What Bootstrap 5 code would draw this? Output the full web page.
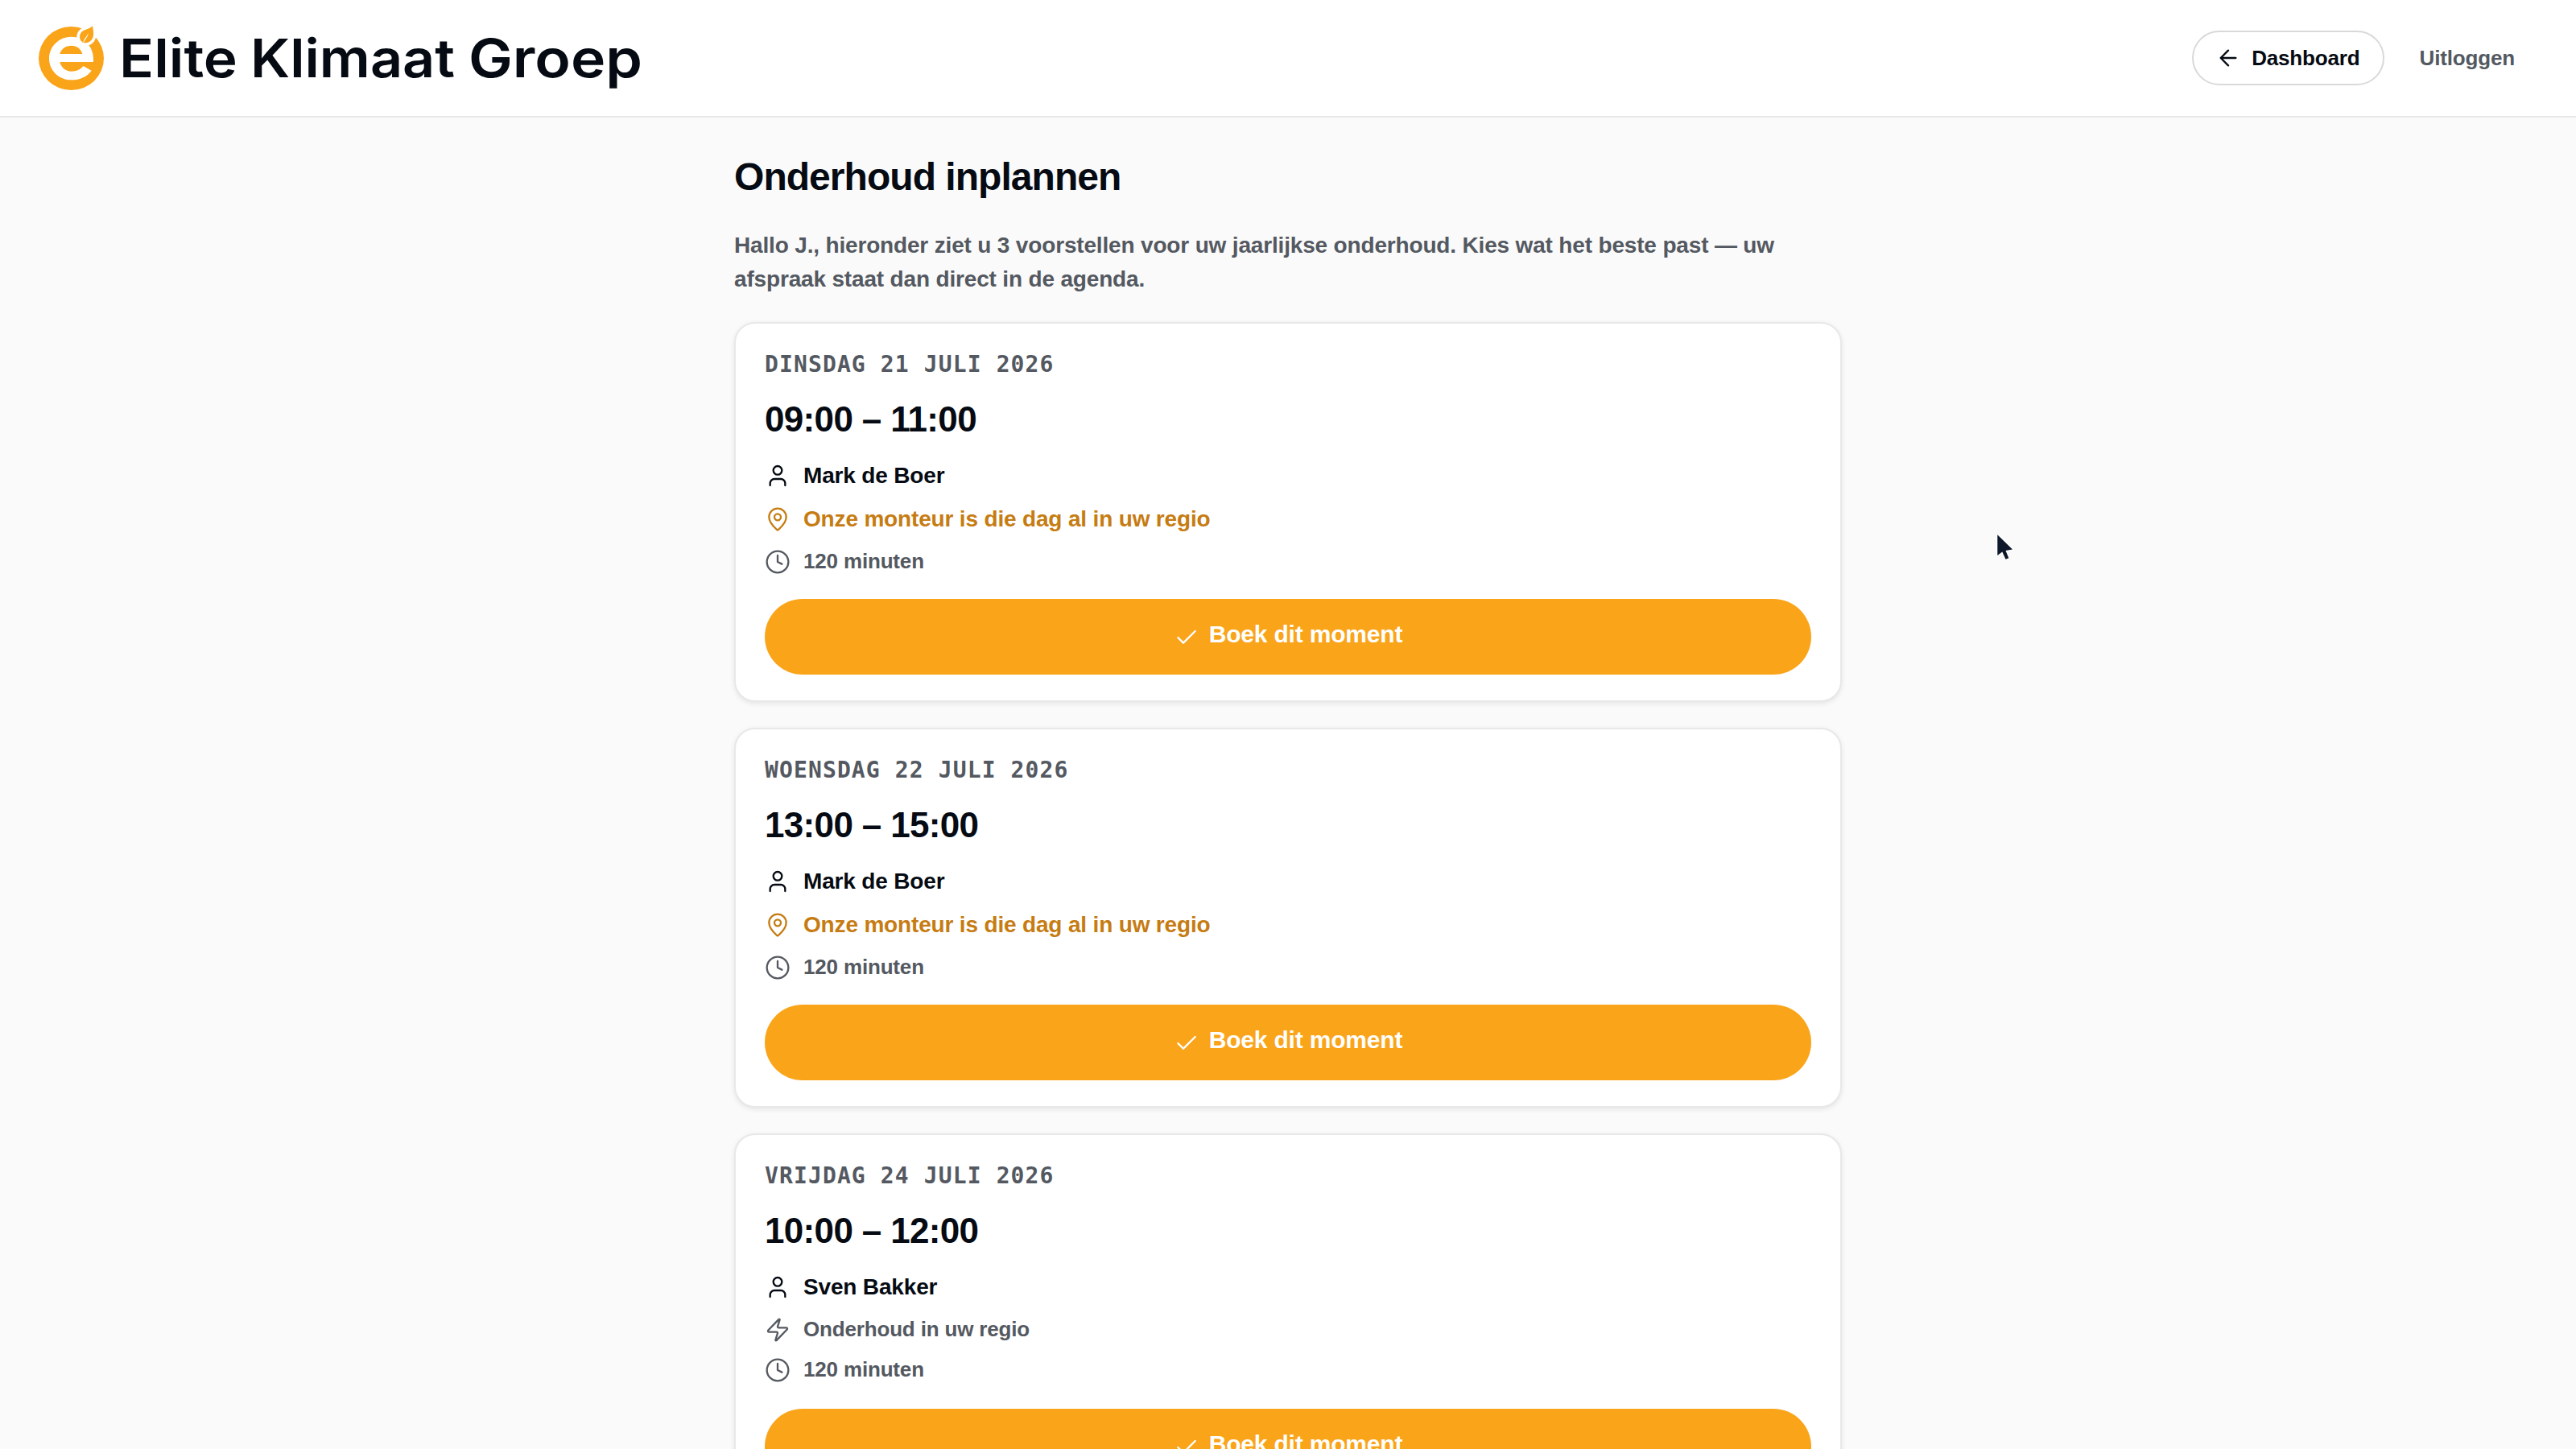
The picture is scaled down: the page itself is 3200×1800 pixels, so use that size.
<!DOCTYPE html>
<html lang="nl">
<head>
<meta charset="utf-8">
<meta name="viewport" content="width=device-width, initial-scale=1">
<title>Onderhoud inplannen – Elite Klimaat Groep</title>
<link href="https://cdn.jsdelivr.net/npm/bootstrap@5.3.0/dist/css/bootstrap.min.css" rel="stylesheet">
<style>
  :root { --ink: #060b13; --muted: #545961; --brand: #faa41a; --accent: #c67c12; --line: #e8e8e8; }
  body { background: #fafafa; color: var(--ink); font-family: "Liberation Sans", Arial, sans-serif; font-weight: 600; font-size: 28px; line-height: 42px; letter-spacing: -.006em; height: 1800px; overflow: hidden; }
  .ico { width: 32px; height: 32px; flex: none; fill: none; stroke: currentColor; stroke-width: 1.75; stroke-linecap: round; stroke-linejoin: round; }
  .topbar { height: 146px; background: #fff; border-bottom: 2px solid var(--line); padding: 0 48px; }
  .brand-mark { width: 82px; height: 80px; }
  .brand-name { width: 680px; height: 80px; font-family: Inter, sans-serif; font-weight: 600; font-size: 66px; letter-spacing: 0; fill: var(--ink); }
  .btn-top { font-size: 26px; line-height: 36px; font-weight: 600; letter-spacing: -.006em; border: 0; padding: 16px 28px; border-radius: 34px; height: 68px; }
  .btn-dash { color: var(--ink); background: #fff; border: 2px solid #d9d9d9; padding: 14px 28px 14px 27px; gap: 13px; }
  .btn-exit { color: var(--muted); }
  .top-nav { gap: 16px; }
  .page { width: 1376px; }
  .page-title { font-size: 48px; line-height: 58px; font-weight: 700; letter-spacing: -.02em; margin: 45px 0 35px; }
  .intro { color: var(--muted); margin: 0 0 32px; }
  .slots { gap: 32px; }
  .slot { background: #fff; border: 2px solid var(--line); border-radius: 26px; padding: 32px 36px; height: 472px; box-shadow: 0 2px 6px rgba(0,0,0,.09); }
  .slot-date { font-family: "DejaVu Sans Mono", monospace; font-weight: 700; letter-spacing: .04em; color: var(--muted); line-height: 38px; }
  .slot-time { font-size: 44px; line-height: 52px; letter-spacing: -.015em; font-weight: 700; margin: 23px 0 22px; }
  .slot-line { gap: 16px; line-height: 43px; margin-bottom: 11px; }
  .slot-line.sm { font-size: 26px; line-height: 39px; margin: 12px 0 0; color: var(--muted); }
  .slot-line.sm + .slot-line.sm { margin-top: 11px; }
  .slot-line.near { color: var(--accent); }
  .btn-book { background: var(--brand); color: #fff; font-size: 30px; line-height: 44px; font-weight: 700; letter-spacing: -.006em; border: 0; border-radius: 48px; height: 94px; gap: 12px; margin-top: 27px; padding: 0; }
  .slot-line.sm + .slot-line.sm + .btn-book { margin-top: 29px; }
  .btn-book .ico { margin-top: 2px; }
  .btn-book span { padding-bottom: 7px; }
  .pointer { position: absolute; left: 2476px; top: 660px; width: 30px; height: 40px; }
</style>
</head>
<body>
<svg class="d-none" xmlns="http://www.w3.org/2000/svg">
  <symbol id="i-user" viewBox="0 0 24 24"><path d="M19 21v-2a4 4 0 0 0-4-4H9a4 4 0 0 0-4 4v2"/><circle cx="12" cy="7" r="4"/></symbol>
  <symbol id="i-pin" viewBox="0 0 24 24"><path d="M20 10c0 4.993-5.539 10.193-7.399 11.799a1 1 0 0 1-1.202 0C9.539 20.193 4 14.993 4 10a8 8 0 0 1 16 0"/><circle cx="12" cy="10" r="3"/></symbol>
  <symbol id="i-clock" viewBox="0 0 24 24"><circle cx="12" cy="12" r="10"/><path d="M12 6v6l4 2"/></symbol>
  <symbol id="i-zap" viewBox="0 0 24 24"><path d="M4 14a1 1 0 0 1-.78-1.63l9.9-10.2a.5.5 0 0 1 .86.46l-1.92 6.02A1 1 0 0 0 13 10h7a1 1 0 0 1 .78 1.63l-9.9 10.2a.5.5 0 0 1-.86-.46l1.92-6.02A1 1 0 0 0 11 14z"/></symbol>
  <symbol id="i-check" viewBox="0 0 24 24"><path d="M20 6 9 17l-5-5"/></symbol>
  <symbol id="i-back" viewBox="0 0 24 24"><path d="m12 19-7-7 7-7M19 12H5"/></symbol>
</svg>

<header class="topbar d-flex align-items-center justify-content-between">
  <a class="d-flex align-items-center text-reset text-decoration-none" href="#">
    <svg class="brand-mark" viewBox="54 66 246 240">
      <ellipse cx="175.500" cy="187.500" rx="121.500" ry="118.500" fill="#faa41a"/>
      <path fill="#fff" fill-rule="evenodd" d="M258 201H133C138 222 155 236 176 236C195 236 209 230 220 216L251 233C236 255 208 268 176 268C130 268 93 233 93 188C93 143 130 107 176 107C222 107 258 143 258 188ZM133 171H217C212 152 196 140 176 140C155 140 138 152 133 171Z"/>
      <path d="M255 67C259 90 261 106 252 118C243 130 229 132 219 128C207 122 204 106 210 95C219 79 241 81 255 67Z" fill="#faa41a" stroke="#fff" stroke-width="22" stroke-linejoin="round" paint-order="stroke"/>
      <path d="M220 127C223 115 232 108 239 94C238 108 227 116 222.500 128Z" fill="#fff"/>
    </svg>
    <svg class="brand-name" viewBox="130 32 680 80" role="img" aria-label="Elite Klimaat Groep">
      <text x="148" y="96" textLength="147" lengthAdjust="spacingAndGlyphs">Elite</text>
      <text x="311" y="96" textLength="254" lengthAdjust="spacingAndGlyphs">Klimaat</text>
      <text x="582" y="96" textLength="216" lengthAdjust="spacingAndGlyphs">Groep</text>
    </svg>
  </a>
  <nav class="top-nav d-flex align-items-center">
    <a class="btn btn-top btn-dash d-flex align-items-center" href="#"><svg class="ico"><use href="#i-back"/></svg>Dashboard</a>
    <a class="btn btn-top btn-exit" href="#">Uitloggen</a>
  </nav>
</header>

<main class="page mx-auto">
  <h1 class="page-title">Onderhoud inplannen</h1>
  <p class="intro">Hallo J., hieronder ziet u 3 voorstellen voor uw jaarlijkse onderhoud. Kies wat het beste past — uw afspraak staat dan direct in de agenda.</p>

  <div class="slots d-flex flex-column">
    <section class="slot">
      <div class="slot-date">DINSDAG 21 JULI 2026</div>
      <div class="slot-time">09:00 – 11:00</div>
      <div class="slot-line d-flex align-items-center"><svg class="ico"><use href="#i-user"/></svg>Mark de Boer</div>
      <div class="slot-line near d-flex align-items-center"><svg class="ico"><use href="#i-pin"/></svg>Onze monteur is die dag al in uw regio</div>
      <div class="slot-line sm d-flex align-items-center"><svg class="ico"><use href="#i-clock"/></svg>120 minuten</div>
      <button class="btn btn-book w-100 d-flex align-items-center justify-content-center"><svg class="ico"><use href="#i-check"/></svg><span>Boek dit moment</span></button>
    </section>
    <section class="slot">
      <div class="slot-date">WOENSDAG 22 JULI 2026</div>
      <div class="slot-time">13:00 – 15:00</div>
      <div class="slot-line d-flex align-items-center"><svg class="ico"><use href="#i-user"/></svg>Mark de Boer</div>
      <div class="slot-line near d-flex align-items-center"><svg class="ico"><use href="#i-pin"/></svg>Onze monteur is die dag al in uw regio</div>
      <div class="slot-line sm d-flex align-items-center"><svg class="ico"><use href="#i-clock"/></svg>120 minuten</div>
      <button class="btn btn-book w-100 d-flex align-items-center justify-content-center"><svg class="ico"><use href="#i-check"/></svg><span>Boek dit moment</span></button>
    </section>
    <section class="slot">
      <div class="slot-date">VRIJDAG 24 JULI 2026</div>
      <div class="slot-time">10:00 – 12:00</div>
      <div class="slot-line d-flex align-items-center"><svg class="ico"><use href="#i-user"/></svg>Sven Bakker</div>
      <div class="slot-line sm d-flex align-items-center"><svg class="ico"><use href="#i-zap"/></svg>Onderhoud in uw regio</div>
      <div class="slot-line sm d-flex align-items-center"><svg class="ico"><use href="#i-clock"/></svg>120 minuten</div>
      <button class="btn btn-book w-100 d-flex align-items-center justify-content-center"><svg class="ico"><use href="#i-check"/></svg><span>Boek dit moment</span></button>
    </section>
  </div>
</main>

<svg class="pointer" viewBox="0 0 30 40"><path d="M5.300 4.300V30L11.300 25.500L15.500 34.700L19.300 33.200L15.500 24L24 22.500Z" fill="#0f172a" stroke="#fff" stroke-width="2.500" stroke-linejoin="round" paint-order="stroke"/></svg>
<script src="https://cdn.jsdelivr.net/npm/bootstrap@5.3.0/dist/js/bootstrap.bundle.min.js"></script>
</body>
</html>
